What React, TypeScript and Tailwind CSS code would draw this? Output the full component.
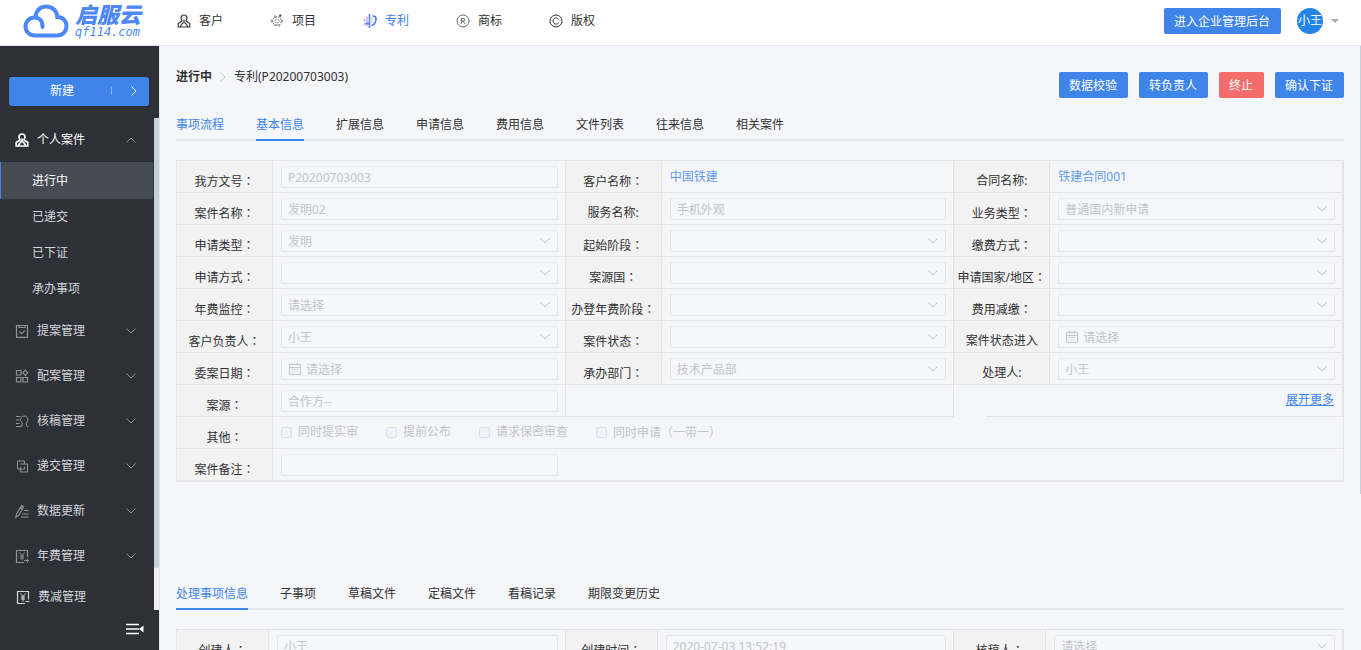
import React, { useId } from "react";

type IconProps = { className?: string };

const Svg = ({ className = "size-[14px]", children, box = 14 }: IconProps & { children: React.ReactNode; box?: number }) => (
  <svg viewBox={`0 0 ${box} ${box}`} className={`shrink-0 ${className}`} fill="none" stroke="currentColor" strokeWidth="1" aria-hidden="true">
    {children}
  </svg>
);

const StampIcon = ({ className, bold }: IconProps & { bold?: boolean }) => (
  <Svg className={className}>
    <g strokeWidth={bold ? 1.7 : 1.1}>
      <path d="M7 1a3 3 0 0 0-3 3c0 1.400.8 2.200 1.300 2.900M7 1a3 3 0 0 1 3 3c0 1.400-.8 2.200-1.300 2.900" />
      <path d="M5.300 6.800 1.200 9.500v3.500h11.600V9.500L8.700 6.800" />
      <path d="M7 5.500v4M3 13l3-4.500M11 13 8 8.500" />
    </g>
  </Svg>
);
const AtomIcon = () => (
  <Svg className="size-[14px] text-[#6a6c70]">
    <path d="M4.500 3h5l2.500 4-2.500 4h-5L2 7Z" strokeDasharray="2.500 .8" />
    <path d="M4 1.500 6.500 3M10 12.500 7.500 11M.8 5.500 2 7 .8 8.500M13.200 5.500 12 7l1.200 1.500M4 12.500 6 11" strokeWidth=".8" />
    <circle cx="7" cy="7" r="2" strokeWidth=".6" />
    <circle cx="10.300" cy="1.700" r="1.100" fill="#303133" stroke="none" />
  </Svg>
);
const PatentIcon = () => (
  <Svg>
    <path d="M6.500 0v14" stroke="#5b83f0" strokeWidth="1.600" />
    <path d="M4 2.500V12" stroke="#d3a5ef" strokeWidth="1.400" />
    <path d="M1.500 5v2.500M1.500 9v2.500" stroke="#a9b5f2" strokeWidth="1.400" />
    <path d="M2.500 9.500H6" stroke="#5b83f0" strokeWidth="1.800" />
    <path d="M8.500 11.500c3-.8 4.500-3.500 4.500-7 0-1.500-1.500-2.500-3.500-2.500" stroke="#4a7df0" strokeWidth="1.600" />
    <path d="M9 3.500v5" stroke="#b9c4f5" />
  </Svg>
);
const RegisteredIcon = () => (
  <Svg className="size-[14px] text-[#5c5e63]">
    <circle cx="7" cy="7" r="6" strokeWidth=".9" />
    <path d="M5.300 9.800V4.500h2a1.300 1.300 0 0 1 0 2.600h-2M7.200 7.200 8.800 9.800" />
  </Svg>
);
const CopyrightIcon = () => (
  <Svg>
    <circle cx="7" cy="7" r="6" />
    <path d="M9.600 5.200A3.100 3.100 0 1 0 9.600 8.800" />
  </Svg>
);
const ClipboardIcon = () => (
  <Svg>
    <path d="M1.500 1.500h11v11.800h-11ZM4 1.500v2h6v-2M4.500 7.500l2.200 2.200 3-3" strokeWidth="1.200" />
  </Svg>
);
const BlocksIcon = () => (
  <Svg>
    <path d="M1.500 1.500h4.500V6H1.500ZM1.500 8.500h4.500V13H1.500ZM8 8.500h4.500V13H8ZM10.300 1.200l2.500 2.600-2.500 2.600-2.500-2.600Z" strokeWidth="1.200" />
  </Svg>
);
const ReviewIcon = () => (
  <Svg>
    <path d="M1 2.500h4.500M1 6h3.500M1 9.500h3.500M1 12.500h6M6.500 12.500l1-3.500a3.700 3.700 0 1 1 3.500 0l1 3.500h1.500" />
  </Svg>
);
const SquaresIcon = () => (
  <Svg>
    <path d="M9.500 5V2h-7v8h2.500M5.500 5h7v8h-7V8M5.500 10h4V7.500" />
  </Svg>
);
const PencilIcon = () => (
  <Svg>
    <path d="M.8 13.300 1.500 10 6.500 1.500l2.200 1.300-5 8.500ZM5.500 3.200l2.200 1.300M9 6.500h4.500M7.500 10h6M6 13h7.500" strokeWidth="1.100" />
  </Svg>
);
const FeeIcon = ({ cut }: { cut?: boolean }) => (
  <Svg>
    <path d="M12.500 8V1.500h-11v12H9" strokeWidth="1.200" />
    <path d="M4.500 3.500 7 6.500l2.500-3M7 6.500v5M4.800 7h4.400M4.800 9h4.400" />
    <path d={cut ? "M9.500 11.500h4M12.500 8v1.500" : "M9 11.500h5M12.500 9.500v4"} />
  </Svg>
);
const CollapseIcon = () => (
  <svg viewBox="0 0 18 12" className="h-3 w-[18px]" aria-hidden="true">
    <path d="M0 1.500h13M0 6h13M0 10.500h13" stroke="white" strokeWidth="1.500" />
    <path d="M17.500 2.500v7L13 6Z" fill="white" />
  </svg>
);
const CalendarIcon = () => (
  <Svg box={12} className="size-3">
    <path d="M.5 1.500h11v10H.5ZM.5 4.500h11M3.500 0v2.500M8.500 0v2.500" />
    <path d="M2.500 6.500h7M2.500 9h7" strokeDasharray="1.500 1" />
  </Svg>
);

type Dir = "down" | "up" | "right";
const chevrons: Record<Dir, string> = { down: "M1.500 3.500 6 8l4.500-4.500", up: "M1.500 8.500 6 4l4.500 4.500", right: "M3.500 1.500 8 6l-4.500 4.500" };
const Chevron = ({ dir, className = "size-3" }: { dir: Dir; className?: string }) => (
  <Svg box={12} className={className}>
    <path d={chevrons[dir]} />
  </Svg>
);

const Logo = () => (
  <a href="#home" className="flex items-center gap-[6px] text-[#4d88fb]">
    <svg viewBox="0 0 46 34" className="h-[34px] w-[46px]" fill="none" stroke="currentColor" strokeWidth="4" strokeLinecap="round" aria-hidden="true">
      <path d="M12.500 13.500C12.500 7 17 2.500 23 2.500c6.500 0 11 4.500 11.300 10.500C40 13 43.500 17 43.500 22c0 5.500-4 9.500-9.500 9.500H12C6.500 31.500 2.500 27.500 2.500 22.500S6.500 13.500 11.500 13.500c4.500 0 8 3 8 8.500v1" />
    </svg>
    <span className="flex flex-col">
      <span className="text-[22px] leading-[22px] font-black italic">启服云</span>
      <span className="font-['DejaVu_Sans_Mono',monospace] text-[12px] leading-[14px] italic">qf114.com</span>
    </span>
  </a>
);

const navItems = [
  { text: "客户", icon: <StampIcon /> },
  { text: "项目", icon: <AtomIcon /> },
  { text: "专利", icon: <PatentIcon />, active: true },
  { text: "商标", icon: <RegisteredIcon /> },
  { text: "版权", icon: <CopyrightIcon /> },
];

const Header = () => (
  <header className="flex h-[46px] shrink-0 items-center border-b border-[#e4e6eb] bg-white pr-[22px] pb-[3px] pl-[23px]">
    <Logo />
    <nav className="ml-9 flex flex-1 gap-[47px]">
      {navItems.map((n) => (
        <a key={n.text} href="#nav" className={n.active ? "flex items-center gap-2 text-[#3f84e9]" : "flex items-center gap-2 text-[#303133]"}>
          {n.icon}
          {n.text}
        </a>
      ))}
    </nav>
    <ActionButton text="进入企业管理后台" />
    <button className="ml-4 flex items-center gap-2">
      <span className="flex size-[26px] items-center justify-center rounded-full bg-[#2384e6] text-white">小王</span>
      <svg viewBox="0 0 8 4" className="h-1 w-2" aria-hidden="true">
        <path d="M0 0h8L4 4Z" fill="#a9abb0" />
      </svg>
    </button>
  </header>
);

const ActionButton = ({ text, danger }: { text: string; danger?: boolean }) => (
  <button
    className={
      danger ? "h-[26px] rounded-xs bg-[#f56c6c] pt-px pr-[11px] pl-[10px] text-white" : "h-[26px] rounded-xs bg-[#3f84e9] pt-px pr-[11px] pl-[10px] text-white"
    }
  >
    {text}
  </button>
);

const subItems = ["已递交", "已下证", "承办事项"];
const groups = [
  { text: "提案管理", icon: <ClipboardIcon /> },
  { text: "配案管理", icon: <BlocksIcon /> },
  { text: "核稿管理", icon: <ReviewIcon /> },
  { text: "递交管理", icon: <SquaresIcon /> },
  { text: "数据更新", icon: <PencilIcon /> },
  { text: "年费管理", icon: <FeeIcon /> },
];

const Sidebar = () => (
  <aside className="flex w-[159px] shrink-0 flex-col bg-[#2e3037] text-[#d3d5d9]">
    <div className="h-[72px] shrink-0 pt-[31px] pr-[10px] pl-[9px]">
      <button className="flex h-[29px] w-full items-center rounded-[3px] bg-[#3f84e9] pr-[9px] pb-px pl-1 text-white">
        <span className="flex-1 text-center">新建</span>
        <span className="mr-4 h-2 w-px bg-[#82b0f3]" />
        <Chevron dir="right" />
      </button>
    </div>
    <div className="flex min-h-0 flex-1">
      <nav className="min-w-0 flex-1">
        <a href="#cases" className="flex h-11 items-center gap-2 pr-[17px] pl-[15px] text-white">
          <StampIcon bold />
          <span className="flex-1">个人案件</span>
          <Chevron dir="up" className="size-3 text-[#8b8e94]" />
        </a>
        <a href="#doing" className="mr-px flex h-[37px] items-center border-l border-[#3f84e9] bg-[#444b53] pl-[31px] text-white">
          进行中
        </a>
        <ul className="pb-px">
          {subItems.map((s) => (
            <li key={s}>
              <a href="#sub" className="flex h-9 items-center pl-8">
                {s}
              </a>
            </li>
          ))}
        </ul>
        {groups.map((g) => (
          <a key={g.text} href="#group" className="flex h-[45px] items-center gap-2 pr-[17px] pl-[15px] text-[#8f9298]">
            {g.icon}
            <span className="flex-1 text-[#d3d5d9]">{g.text}</span>
            <Chevron dir="down" />
          </a>
        ))}
        <a href="#reduce" className="flex h-[37px] items-center gap-2 pl-4">
          <FeeIcon cut />
          费减管理
        </a>
      </nav>
      <div className="w-[5px] bg-[#f0f0f0] pb-[42px]">
        <div className="h-full rounded-b-xs bg-[#c5d0d9]" />
      </div>
    </div>
    <button className="flex h-10 shrink-0 items-center justify-end pr-[15px] pb-[2px]" aria-label="收起菜单">
      <CollapseIcon />
    </button>
  </aside>
);

const Tabs = ({ items, active, first }: { items: string[]; active: number; first?: boolean }) => (
  <nav className="flex h-8 gap-8 border-b-2 border-[#e4e7ed]">
    {items.map((t, i) => (
      <a
        key={t}
        href="#tab"
        className={
          i === active
            ? "-mb-[2px] flex items-center border-b-2 border-[#3f84e9] pt-[2px] text-[#3f84e9]"
            : first && i === 0
              ? "flex items-center pt-[2px] text-[#3f84e9]"
              : "flex items-center pt-[2px] text-[#303133]"
        }
      >
        {t}
      </a>
    ))}
  </nav>
);

type FieldData = { label: string; kind: "text" | "select" | "date" | "link"; value?: string };

const boxClass = "h-[22px] w-full rounded-xs border border-[#e4e7ed] bg-[#f5f7fa] text-[#c0c4cc] placeholder:text-[#c0c4cc] opacity-100 [font-variant-ligatures:none]";

const Control = ({ id, kind, value = "" }: { id: string; kind: FieldData["kind"]; value?: string }) => {
  if (kind === "link")
    return (
      <a id={id} href="#detail" className="leading-[22px] text-[#5f9bee]">
        {value}
      </a>
    );
  if (kind === "select")
    return (
      <span className="relative block">
        <select id={id} disabled className={`${boxClass} appearance-none px-[6px] pt-px`}>
          <option>{value}</option>
        </select>
        <span className="absolute top-[5px] right-[7px] text-[#c0c4cc]">
          <Chevron dir="down" />
        </span>
      </span>
    );
  if (kind === "date")
    return (
      <span className="relative block">
        <input id={id} disabled placeholder={value} className={`${boxClass} pl-6`} />
        <span className="absolute top-[5px] left-2 text-[#c0c4cc]">
          <CalendarIcon />
        </span>
      </span>
    );
  return <input id={id} disabled defaultValue={value} className={`${boxClass} px-[6px]`} />;
};

/* Full-width punctuation is taken from the TC face, where it sits in the middle of its cell. */
const Text = ({ text }: { text: string }) => (
  <>
    {text.split(/([：（）])/).map((part, i) =>
      i % 2 ? (
        <span key={i} className="font-['Noto_Sans_CJK_TC',sans-serif]">
          {part}
        </span>
      ) : (
        part
      ),
    )}
  </>
);

const labelBase = "shrink-0 overflow-hidden border-r border-[#e4e4e4] bg-[#f2f2f2] pt-[10px] text-center leading-5 whitespace-nowrap text-[#303133]";

const Field = ({ label, kind, value, narrow }: FieldData & { narrow?: boolean }) => {
  const id = useId();
  return (
    <div className="flex h-8 border-r border-b border-[#e4e4e4]">
      <label htmlFor={id} className={narrow ? `${labelBase} w-[92px]` : `${labelBase} w-24`}>
        <Text text={label} />
      </label>
      <div className="min-w-0 flex-1 pt-[5px] pr-[7px] pl-2">
        <Control id={id} kind={kind} value={value} />
      </div>
    </div>
  );
};

const fields: FieldData[] = [
  { label: "我方文号：", kind: "text", value: "P20200703003" },
  { label: "客户名称：", kind: "link", value: "中国铁建" },
  { label: "合同名称:", kind: "link", value: "铁建合同001" },
  { label: "案件名称：", kind: "text", value: "发明02" },
  { label: "服务名称:", kind: "text", value: "手机外观" },
  { label: "业务类型：", kind: "select", value: "普通国内新申请" },
  { label: "申请类型：", kind: "select", value: "发明" },
  { label: "起始阶段：", kind: "select" },
  { label: "缴费方式：", kind: "select" },
  { label: "申请方式：", kind: "select" },
  { label: "案源国：", kind: "select" },
  { label: "申请国家/地区：", kind: "select" },
  { label: "年费监控：", kind: "select", value: "请选择" },
  { label: "办登年费阶段：", kind: "select" },
  { label: "费用减缴：", kind: "select" },
  { label: "客户负责人：", kind: "select", value: "小王" },
  { label: "案件状态：", kind: "select" },
  { label: "案件状态进入", kind: "date", value: "请选择" },
  { label: "委案日期：", kind: "date", value: "请选择" },
  { label: "承办部门：", kind: "select", value: "技术产品部" },
  { label: "处理人:", kind: "select", value: "小王" },
  { label: "案源：", kind: "text", value: "合作方--" },
];

const taskFields: FieldData[] = [
  { label: "创建人：", kind: "text", value: "小王" },
  { label: "创建时间：", kind: "text", value: "2020-07-03 13:52:19" },
  { label: "核稿人：", kind: "select", value: "请选择" },
];

const checks = ["同时提实审", "提前公布", "请求保密审查", "同时申请（一带一）"];

const BasicInfo = () => (
  <form className="grid grid-cols-3 border border-[#e4e4e4]">
    {fields.map((f) => (
      <Field key={f.label} {...f} />
    ))}
    <div className="h-8 border-r border-b border-[#e4e4e4]" />
    <div className="h-8 border-r border-[#e4e4e4] pl-8">
      <div className="flex h-full justify-end border-b border-[#e4e4e4] pt-[5px] pr-2">
        <a href="#more" className="leading-5 text-[#3f84e9] underline">
          展开更多
        </a>
      </div>
    </div>
    <div className="col-span-3 flex h-8 border-b border-[#e4e4e4]">
      <span className={`${labelBase} w-24`}>
        <Text text="其他：" />
      </span>
      <div className="flex gap-7 pt-[5px] pl-2">
        {checks.map((c) => (
          <label key={c} className="flex h-5 items-center gap-[6px] text-[#c0c4cc]">
            <input type="checkbox" disabled className="size-[11px] appearance-none rounded-xs border border-[#dcdfe6] bg-[#edf2fc]" />
            <span>
              <Text text={c} />
            </span>
          </label>
        ))}
      </div>
    </div>
    <div className="col-span-3 grid grid-cols-3 border-b border-[#e4e4e4]">
      <div className="flex h-[31px]">
        <label htmlFor="remark" className={`${labelBase} w-24`}>
          <Text text="案件备注：" />
        </label>
        <div className="min-w-0 flex-1 pt-[5px] pr-2 pl-2">
          <Control id="remark" kind="text" />
        </div>
      </div>
    </div>
  </form>
);

export default function App() {
  return (
    <div className="flex h-screen flex-col overflow-hidden bg-[#f5f6fa] font-['Noto_Sans','Noto_Sans_CJK_SC',sans-serif] text-[12px] leading-4 text-[#303133]">
      <Header />
      <div className="flex min-h-0 flex-1">
        <Sidebar />
        <main className="min-w-0 flex-1 overflow-hidden border-l border-[#e4e6eb] pr-4 pl-4">
          <div className="flex justify-between pt-[21px]">
            <div className="flex h-5 items-center gap-[5px]">
              <b>进行中</b>
              <Chevron dir="right" className="size-3 text-[#c0c4cc]" />
              <span>专利(P20200703003)</span>
            </div>
            <div className="flex gap-[11px] pt-[5px]">
              <ActionButton text="数据校验" />
              <ActionButton text="转负责人" />
              <ActionButton text="终止" danger />
              <ActionButton text="确认下证" />
            </div>
          </div>
          <div className="pt-[11px] pb-[19px]">
            <Tabs items={["事项流程", "基本信息", "扩展信息", "申请信息", "费用信息", "文件列表", "往来信息", "相关案件"]} active={1} first />
          </div>
          <BasicInfo />
          <div className="pt-24 pb-[19px]">
            <Tabs items={["处理事项信息", "子事项", "草稿文件", "定稿文件", "看稿记录", "期限变更历史"]} active={0} />
          </div>
          <form className="grid grid-cols-3 border-t border-r border-l border-[#e4e4e4]">
            {taskFields.map((f) => (
              <Field key={f.label} {...f} narrow />
            ))}
          </form>
        </main>
        <div className="h-[448px] w-px bg-[#c5d0d9]" />
      </div>
    </div>
  );
}
